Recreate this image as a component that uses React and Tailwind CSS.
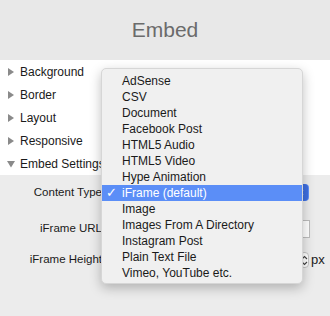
import React from "react";

const sections = ["Background", "Border", "Layout", "Responsive", "Embed Settings"];
const items = [
  "AdSense",
  "CSV",
  "Document",
  "Facebook Post",
  "HTML5 Audio",
  "HTML5 Video",
  "Hype Animation",
  "iFrame (default)",
  "Image",
  "Images From A Directory",
  "Instagram Post",
  "Plain Text File",
  "Vimeo, YouTube etc.",
];

function Tri({ down }) {
  return (
    <svg width="8" height="8" viewBox="0 0 8 8" className="shrink-0">
      {down ? (
        <polygon points="0,1 8,1 4,7.5" fill="#8a8a8a" />
      ) : (
        <polygon points="1,0 7,4 1,8" fill="#8a8a8a" />
      )}
    </svg>
  );
}

function Chevrons({ color }) {
  return (
    <svg width="7" height="11" viewBox="0 0 7 11">
      <polyline points="1,4 3.5,1.5 6,4" fill="none" stroke={color} strokeWidth="1.1" />
      <polyline points="1,7 3.5,9.5 6,7" fill="none" stroke={color} strokeWidth="1.1" />
    </svg>
  );
}

export default function App() {
  return (
    <div className="relative w-[330px] h-[316px] overflow-hidden bg-[#ececec] font-['Liberation_Sans',Arial,sans-serif] text-[#1a1a1a]">
      <div className="h-[60px] bg-[#e8e8e8] flex items-center justify-center text-[21px] text-[#6b6b6b]">
        Embed
      </div>
      <div className="bg-white">
        {sections.map((s, i) => (
          <div key={s} className="h-[23px] flex items-center pl-[7px] gap-[5px] text-[12px]">
            <Tri down={i === 4} />
            <span>{s}</span>
          </div>
        ))}
      </div>
      <div className="flex flex-col text-[11.5px]">
        <div className="mt-[9px] h-[17px] flex items-center">
          <div className="w-[103px] text-right pr-[1px]">Content Type</div>
          <div className="ml-[5px] w-[201px] h-[17px] rounded-[4px] bg-[#5e8ff7] flex items-center justify-end pr-[1px]">
            <div className="h-[17px] w-[15px] rounded-r-[4px] bg-[#3f6fe0] flex items-center justify-center">
              <Chevrons color="#ffffff" />
            </div>
          </div>
        </div>
        <div className="mt-[19px] h-[18px] flex items-center">
          <div className="w-[103px] text-right pr-[1px]">iFrame URL</div>
          <div className="ml-[5px] w-[202px] h-[18px] bg-white border border-[#bdbdbd] flex items-end justify-end pr-[6px] pb-[3px]">
            <div className="w-[2px] h-[2px] bg-[#555]" />
          </div>
        </div>
        <div className="mt-[14px] h-[16px] flex items-center">
          <div className="w-[103px] text-right pr-[1px]">iFrame Height</div>
          <div className="ml-[5px] w-[186px] h-[18px] bg-white border border-[#bdbdbd]" />
          <div className="ml-[6px] w-[9px] h-[16px] rounded-[4px] bg-white border border-[#c4c4c4] flex items-center justify-center">
            <Chevrons color="#444" />
          </div>
          <div className="ml-[2px] text-[13px]">px</div>
        </div>
      </div>

      <div className="absolute left-[101px] top-[68px] w-[202px] h-[216px] rounded-[5px] bg-[#f0f0f0] border border-[#d6d6d6] shadow-[0_4px_12px_rgba(0,0,0,0.25)] pt-[4px] text-[12px] text-[#1a1a1a]">
        {items.map((it, i) => (
          <div
            key={it}
            className={
              "h-[16px] flex items-center " +
              (i === 7 ? "bg-[#5b8ef7] text-white" : "")
            }
          >
            <span className="w-[20px] pl-[4px] text-[13px]">{i === 7 ? "✓" : ""}</span>
            <span>{it}</span>
          </div>
        ))}
      </div>
    </div>
  );
}
